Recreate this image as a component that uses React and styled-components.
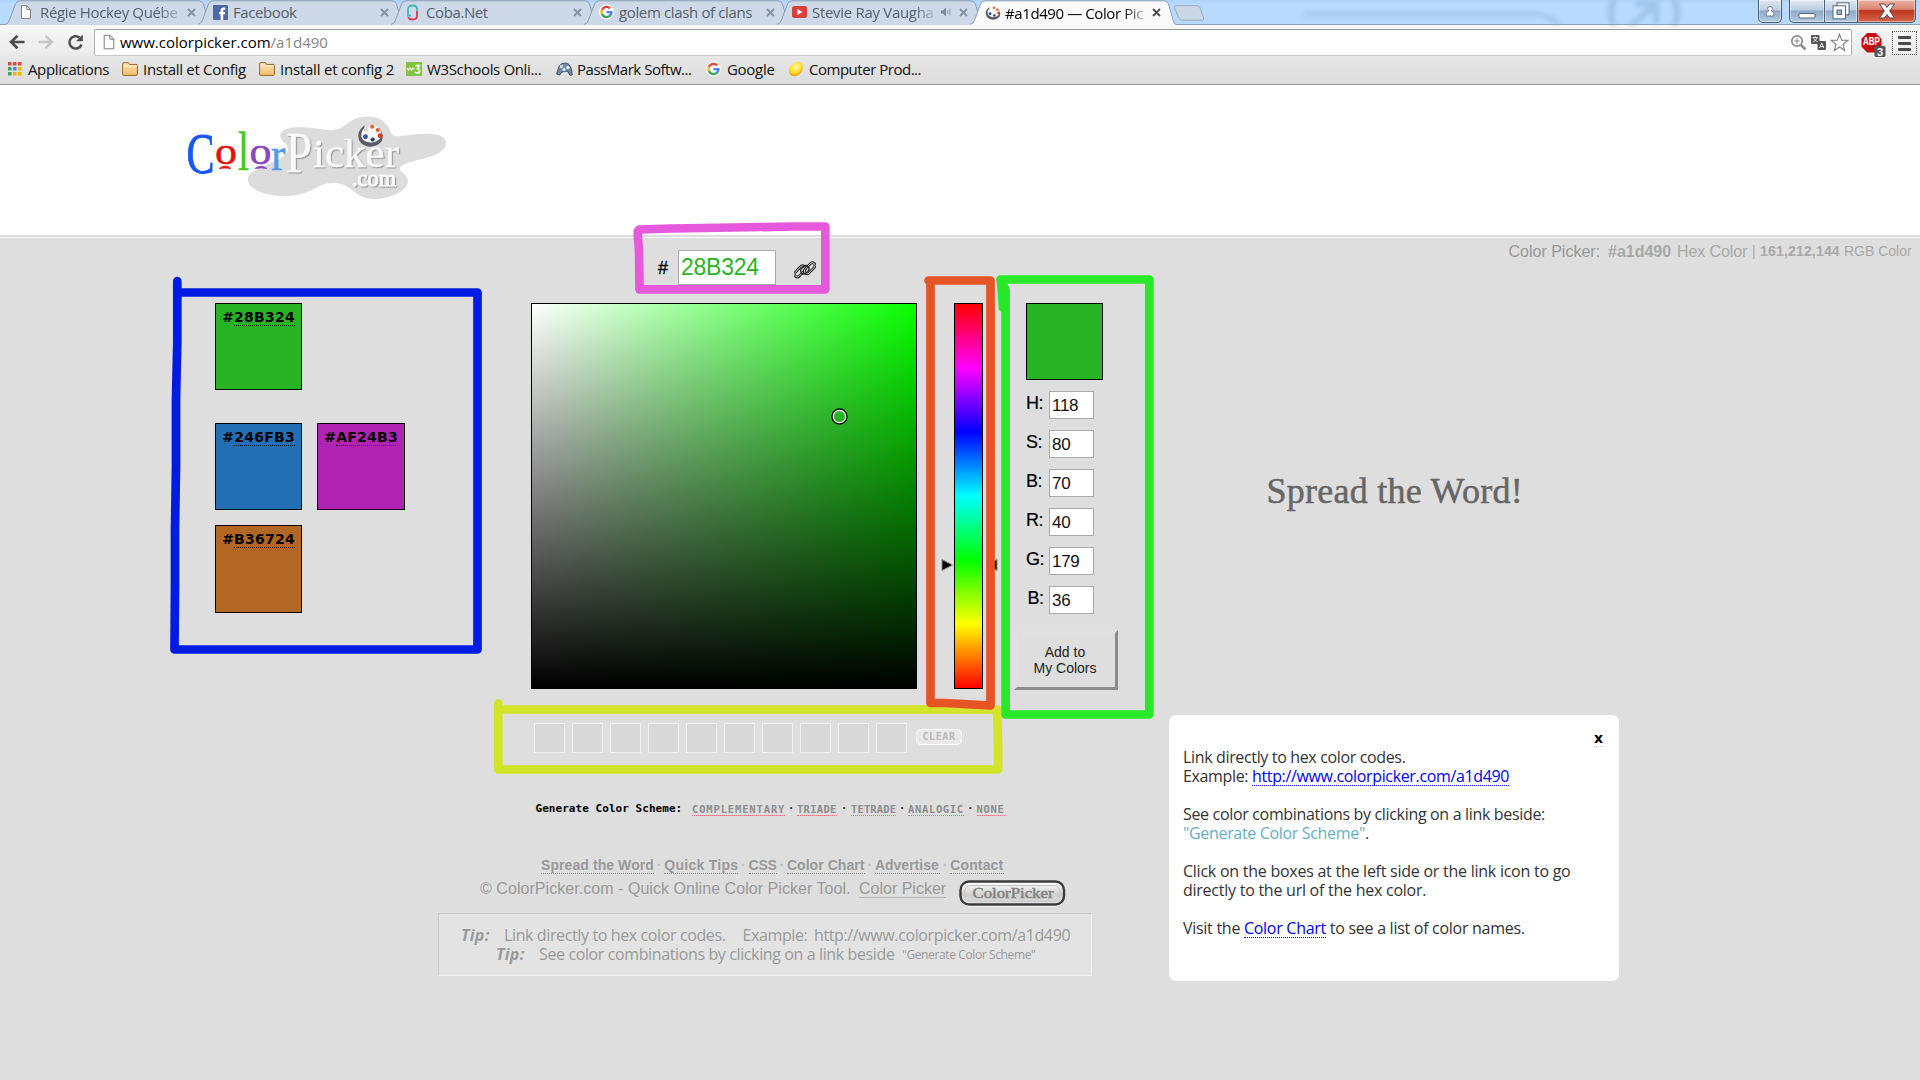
import React from "react";
import styled, { createGlobalStyle } from "styled-components";

const UI = '"Open Sans", "Noto Sans", sans-serif';
const ARIAL = '"Liberation Sans", Arial, sans-serif';
const VERDANA = '"DejaVu Sans", Verdana, sans-serif';
const PIXEL = '"DejaVu Sans Mono", monospace';

const GlobalStyle = createGlobalStyle`
  *, *::before, *::after { box-sizing: border-box; }
  body { margin: 0; background: #dedede; font-family: ${ARIAL}; overflow: hidden; }
`;

const Page = styled.div`
  position: relative;
  width: 1920px;
  height: 1080px;
  display: flex;
  flex-direction: column;
  overflow: hidden;
  background: #dedede;
`;

/* ---------- browser frame ---------- */

const TitleBar = styled.div`
  position: relative;
  display: flex;
  align-items: flex-start;
  height: 25px;
  padding-left: 5px;
  background: linear-gradient(#aed2f8, #b7dafe 4px, #b7dafe);
  border-bottom: 1px solid #8e9fb3;
`;

const GlassDrawing = styled.svg`
  position: absolute;
  left: 1290px;
  top: 0;
  filter: blur(2px);
`;

const TabItem = styled.div`
  position: relative;
  z-index: ${(p) => (p.$active ? 3 : 1)};
  flex: none;
  width: 206px;
  height: ${(p) => (p.$active ? 25 : 24)}px;
  margin-right: -13px;
  display: flex;
  align-items: center;
  padding: 0 15px 0 15px;
  color: ${(p) => (p.$active ? "#000" : "#56606b")};
`;

const TabShape = styled.svg`
  position: absolute;
  left: 0;
  top: 0;
`;

const TabIcon = styled.span`
  position: relative;
  width: 20px;
  display: flex;
  flex: none;
  svg { display: block; }
`;

const TabTitle = styled.span`
  position: relative;
  flex: 1;
  font: 15px/24px ${UI};
  letter-spacing: ${(p) => p.$ls ?? -0.4}px;
  white-space: nowrap;
  ${(p) => p.$fade && "mask-image: linear-gradient(to right, #000 84%, rgba(0, 0, 0, 0.25) 100%);"}
`;

const TabTail = styled.span`
  position: relative;
  display: flex;
  align-items: center;
  gap: 8px;
  margin-left: 7px;
`;

const NewTab = styled.svg`
  position: relative;
  margin: 5px 0 0 10px;
`;

const WindowControls = styled.div`
  position: absolute;
  right: 4px;
  top: 0;
  display: flex;
`;

const WinButton = styled.div`
  width: ${(p) => p.$w}px;
  height: 23px;
  margin-right: ${(p) => p.$mr || 0}px;
  display: flex;
  align-items: center;
  justify-content: center;
  border: 1px solid #4d5c70;
  border-top: 0;
  border-left-width: ${(p) => (p.$join ? 0 : 1)}px;
  border-radius: ${(p) => p.$radius};
  background: ${(p) => p.$bg};
  box-shadow: inset 0 0 0 1px rgba(255, 255, 255, 0.45);
`;

const Toolbar = styled.div`
  display: flex;
  align-items: flex-start;
  height: 33px;
  padding: 4px 0 0 9px;
  background: linear-gradient(#f8f8f8, #e9e9e9);
`;

const NavIcon = styled.svg`
  margin: 4px ${(p) => p.$mr}px 0 0;
`;

const Omnibox = styled.div`
  display: flex;
  align-items: center;
  width: 1758px;
  height: 27px;
  padding: 0 2px 1px 8px;
  background: #fff;
  border: 1px solid #b3b3b3;
  border-top-color: #9a9a9a;
  border-bottom-color: #c8c8c8;
  border-radius: 2px;
`;

const Url = styled.span`
  flex: 1;
  margin-left: 5px;
  font: 15px/24px ${UI};
  color: #000;
  em { font-style: normal; color: #858585; }
`;

const OmniActions = styled.span`
  display: flex;
  align-items: center;
  gap: 4px;
`;

const Extensions = styled.div`
  display: flex;
  align-items: flex-start;
  gap: 5px;
  margin-left: 9px;
`;

const MenuButton = styled.div`
  display: flex;
  flex-direction: column;
  justify-content: center;
  align-items: center;
  gap: 3px;
  width: 25px;
  height: 24px;
  margin-top: 2px;
  border: 1px dotted #555;
  i { width: 13px; height: 3px; background: #4a4a4a; border-radius: 1px; }
`;

const Bookmarks = styled.div`
  display: flex;
  align-items: center;
  height: 27px;
  padding: 0 0 4px 8px;
  background: linear-gradient(#e6e6e6, #dcdcdc);
  border-bottom: 1px solid #999;
`;

const Bookmark = styled.span`
  display: flex;
  align-items: center;
  width: ${(p) => p.$w}px;
  font: 15px/20px ${UI};
  letter-spacing: ${(p) => p.$ls}px;
  color: #111;
  white-space: nowrap;
  svg { flex: none; margin-right: ${(p) => p.$gap || 5}px; }
`;

/* ---------- page header ---------- */

const SiteHeader = styled.header`
  height: 153px;
  padding: 25px 0 0 180px;
  background: linear-gradient(#fff 150px, #dcdcdc 150px, #dcdcdc 152px, #fff 152px);
`;

const HexRow = styled.div`
  display: flex;
  align-items: flex-start;
  height: 65px;
  padding: 0 8px 0 658px;
`;

const Hash = styled.span`
  width: 20px;
  margin-top: 19px;
  font: 18px/22px ${ARIAL};
  -webkit-text-stroke: 0.3px #000;
`;

const HexInput = styled.div`
  width: 98px;
  height: 35px;
  margin-top: 12px;
  padding-left: 2px;
  border: 1px solid #a9a9a9;
  background: #fff;
  color: #28b324;
  font: 23px/33px ${ARIAL};
  letter-spacing: -0.25px;
`;

const LinkIcon = styled.svg`
  margin: 21px 0 0 18px;
`;

const ColorMeta = styled.div`
  display: flex;
  margin-left: auto;
  color: #a8a8a8;
  font: 16px/27px ${ARIAL};
  white-space: nowrap;
`;

const MetaPart = styled.span`
  width: ${(p) => p.$w}px;
  font-size: ${(p) => p.$size || 16}px;
  font-weight: ${(p) => (p.$bold ? 700 : 400)};
  letter-spacing: ${(p) => p.$ls || 0}px;
  color: ${(p) => p.$color || "#a8a8a8"};
`;

/* ---------- picker ---------- */

const PickerRow = styled.div`
  display: flex;
  align-items: flex-start;
  height: 387px;
  padding-left: 215px;
`;

const Scheme = styled.div`
  display: flex;
  flex-direction: column;
  gap: 15px;
  width: 316px;
`;

const SchemeLine = styled.div`
  display: flex;
  gap: 15px;
  margin-bottom: ${(p) => (p.$main ? 18 : 0)}px;
`;

const SchemeSwatch = styled.div`
  width: ${(p) => p.$w || 87}px;
  height: ${(p) => p.$h || 87}px;
  padding: 6px 6px 0 0;
  border: 1px solid #000;
  background: ${(p) => p.$color};
  text-align: right;
  font: bold 14px/14px ${VERDANA};
  letter-spacing: 0.25px;
  color: #000;
  a { display: inline-block; padding-bottom: 1px; border-bottom: 1px dotted #000; }
`;

const Field = styled.div`
  position: relative;
  width: 386px;
  height: 386px;
  border: 1px solid #000;
  background: linear-gradient(to top, #000, rgba(0, 0, 0, 0)), linear-gradient(to right, #fff, #08ff00);
`;

const Cursor = styled.svg`
  position: absolute;
  left: 299px;
  top: 104px;
`;

const HueStrip = styled.div`
  position: relative;
  width: 29px;
  height: 386px;
  margin-left: 37px;
  border: 1px solid #000;
  background: linear-gradient(#f00, #f0f 16.67%, #00f 33.33%, #0ff 50%, #0f0 66.67%, #ff0 83.33%, #f00);
`;

const HueArrow = styled.svg`
  position: absolute;
  top: 254px;
  left: ${(p) => p.$x}px;
`;

const Controls = styled.div`
  display: flex;
  flex-direction: column;
  align-items: flex-start;
  width: 104px;
  margin-left: 31px;
`;

const Current = styled.div`
  width: 77px;
  height: 77px;
  margin: 0 0 11px 12px;
  border: 1px solid #000;
  background: #28b324;
`;

const Channel = styled.div`
  display: flex;
  align-items: flex-start;
  height: 28px;
  margin: 0 0 11px 12px;
`;

const ChannelLabel = styled.span`
  width: 23px;
  padding-left: ${(p) => p.$indent || 0}px;
  font: 18px/25px ${ARIAL};
  letter-spacing: -0.5px;
  -webkit-text-stroke: 0.2px #000;
`;

const ChannelInput = styled.div`
  width: 45px;
  height: 28px;
  padding-left: 2px;
  border: 1px solid #a9a9a9;
  background: #fff;
  font: 17px/28px ${ARIAL};
  letter-spacing: -0.3px;
  color: #111;
`;

const AddButton = styled.div`
  width: 104px;
  height: 60px;
  margin-top: 5px;
  padding: 11px 2px 0 0;
  border: 3px solid;
  border-color: #e0e0e0 #8c8c8c #8c8c8c #e0e0e0;
  background: #dedede;
  text-align: center;
  font: 14px/16px ${ARIAL};
  color: #222;
`;

const SpreadTitle = styled.div`
  margin: 168px 0 0 148.5px;
  font: 36px/40px "Liberation Serif", "Times New Roman", serif;
  letter-spacing: 0.25px;
  color: #666;
  -webkit-text-stroke: 0.5px #666;
  white-space: nowrap;
`;

/* ---------- lower area ---------- */

const LowerRow = styled.div`
  display: flex;
  align-items: flex-start;
`;

const LowerLeft = styled.div`
  width: 1169px;
`;

const SavedRow = styled.div`
  display: flex;
  align-items: flex-start;
  gap: 7px;
  padding: 33px 0 0 534px;
`;

const SavedBox = styled.i`
  width: 31px;
  height: 30px;
  border: 1px solid #efefef;
  background: #d8d8d8;
`;

const ClearButton = styled.span`
  width: 46px;
  height: 16px;
  margin: 6px 0 0 2px;
  border: 1.5px solid #fff;
  border-radius: 5px;
  background: #e8e8e8;
  text-align: center;
  font: bold 10px/14px ${PIXEL};
  letter-spacing: 0.6px;
  color: #b8b8b8;
`;

const SchemeLinks = styled.div`
  display: flex;
  height: 16px;
  margin-top: 48px;
  padding-left: 535.5px;
  font: bold 11px/16px ${PIXEL};
  letter-spacing: 0.05px;
  white-space: nowrap;
`;

const SchemeLabel = styled.span`
  width: 156.5px;
`;

const SchemeLink = styled.a`
  width: ${(p) => p.$w}px;
  height: 15px;
  font-size: 10.5px;
  letter-spacing: ${(p) => p.$ls}px;
  color: #8c8c8c;
  border-bottom: 1px dotted #e07070;
`;

const Dot = styled.span`
  width: ${(p) => p.$w}px;
  text-align: center;
  letter-spacing: 0;
  color: ${(p) => p.$color || "#333"};
`;

const FooterLinks = styled.div`
  display: flex;
  margin-top: 40px;
  padding-left: 541px;
  font: bold 14px/16px ${ARIAL};
  color: #999;
  white-space: nowrap;
`;

const FooterLink = styled.a`
  width: ${(p) => p.$w}px;
  letter-spacing: ${(p) => p.$ls || 0}px;
  border-bottom: 1px dotted #888;
`;

const Copyright = styled.div`
  display: flex;
  align-items: flex-start;
  height: 27px;
  margin-top: 6px;
  padding-left: 480px;
  font: 16px/17px ${ARIAL};
  color: #999;
  white-space: nowrap;
  span { width: 379px; letter-spacing: 0.05px; }
  a { border-bottom: 1px solid #b8b8b8; }
`;

const BadgeDrawing = styled.svg`
  margin-left: 13px;
`;

const TipBox = styled.div`
  width: 654px;
  height: 63px;
  margin: 6px 0 0 438px;
  padding-top: 12px;
  border: 1px solid #f2f2f2;
  border-top-color: #cacaca;
  border-left-color: #cacaca;
  background: #e3e3e3;
  font: 16px/19px ${UI};
  letter-spacing: -0.38px;
  color: #999;
`;

const TipLine = styled.div`
  display: flex;
  padding-left: ${(p) => p.$indent}px;
  white-space: nowrap;
`;

const TipPart = styled.span`
  flex: none;
  width: ${(p) => p.$w}px;
  font-size: ${(p) => p.$size || 16}px;
`;

const TipLead = styled(TipPart)`
  font-weight: 700;
  font-style: italic;
  letter-spacing: 0.3px;
`;

const HelpCard = styled.section`
  display: flex;
  flex-direction: column;
  width: 450px;
  height: 266px;
  margin-top: 25px;
  padding: 17px 16px 0 14px;
  border-radius: 7px;
  background: #fff;
  font: 16px/19px ${UI};
  color: #333;
  white-space: nowrap;
`;

const Close = styled.b`
  align-self: flex-end;
  height: 15px;
  margin-bottom: 1px;
  font: bold 14px/13px ${VERDANA};
  color: #000;
  border-bottom: 1px dotted #ccc;
`;

const HelpText = styled.p`
  margin: 0 0 19px;
  letter-spacing: ${(p) => p.$ls ?? -0.35}px;
`;

const HelpLink = styled.a`
  display: inline-block;
  height: 19px;
  color: #0000ee;
  border-bottom: 1px dotted #0000ee;
  vertical-align: top;
`;

const Accent = styled.span`
  color: #65b0bf;
`;

const Markup = styled.svg`
  position: absolute;
  left: 0;
  top: 0;
  pointer-events: none;
`;

/* ---------- icons ---------- */

const PageIcon = ({ h = 15 }) => (
  <svg width="12" height={h} viewBox="0 0 12 15">
    <path d="M1.2 .7h5.6l4 4v9.6H1.2z" fill="#fdfdfd" stroke="#7a7a7a" />
    <path d="M6.8 .7v4h4" fill="none" stroke="#7a7a7a" />
  </svg>
);

const FacebookIcon = () => (
  <svg width="15" height="15" viewBox="0 0 15 15">
    <rect width="15" height="15" rx="1" fill="#4e69a2" />
    <path d="M7.6 15V9.3H6V7h1.600V5.400C7.600 3.500 8.700 2.500 10.400 2.500h1.900v2.300h-1.200c-.7 0-.9.4-.9 1V7h2.100l-.3 2.300h-1.800V15z" fill="#fff" />
  </svg>
);

const CobaIcon = () => (
  <svg width="13" height="17" viewBox="0 0 13 17" fill="none" strokeWidth="1.800">
    <path d="M5 11.500H2V5C2 3 3.500 1.500 6.500 1.500S11 3 11 5v2" stroke="#45b5bd" />
    <path d="M11 7v5c0 2.200-1.500 3.500-4.500 3.500-2.500 0-3.800-.8-4.300-2.300" stroke="#cf3a57" />
  </svg>
);

const GoogleIcon = () => (
  <svg width="15" height="16" viewBox="0 0 48 48">
    <circle cx="24" cy="24" r="24" fill="#fff" />
    <path fill="#ea4335" d="M24 11.500c3.300 0 6.200 1.200 8.500 3.300l5.500-5.500C34.500 6 29.700 4 24 4 16.200 4 9.500 8.500 6.200 15l6.400 5c1.600-4.900 6.100-8.500 11.400-8.500z" />
    <path fill="#4285f4" d="M43.500 24.500c0-1.500-.1-2.600-.4-4H24v7.700h11c-.6 3-2.300 5-4.700 6.500l6.200 4.900c4.300-4 7-9.200 7-15.100z" />
    <path fill="#fbbc05" d="M12.600 28c-.5-1.300-.7-2.600-.7-4s.3-2.700.7-4l-6.400-5C4.800 17.700 4 20.700 4 24s.8 6.300 2.200 9z" />
    <path fill="#34a853" d="M24 44c5.400 0 9.900-1.800 12.900-4.700l-6.200-4.900c-1.700 1.200-3.900 1.900-6.700 1.900-5.300 0-9.800-3.500-11.400-8.300l-6.400 5C9.500 39.500 16.200 44 24 44z" />
  </svg>
);

const YoutubeIcon = () => (
  <svg width="15" height="12" viewBox="0 0 15 12">
    <rect width="15" height="12" rx="2.500" fill="#db3f3c" />
    <path d="M5.500 3v6l5-3z" fill="#fff" />
  </svg>
);

const PaletteIcon = ({ w = 16 }) => (
  <svg width={w} height={w * 0.93} viewBox="0 0 24 22">
    <path d="M7 3C1 6-1 14 4 19c5 4 13 4 18-2 2-5 0-10-3-12-4-3-8-1-8 3 0 4-6 3-4-6z" fill="#5c5c68" />
    <path d="M8 4C4 6 2 13 6 16c5 3.500 12 2 15-2 2-4 0-8-3-10-4-3-8-2-8 2 0 5-6 3-2-3z" fill="#f8f8f8" />
    <circle cx="13.500" cy="4" r="1.900" fill="#df6a35" />
    <circle cx="18.500" cy="7" r="1.900" fill="#d9623b" />
    <circle cx="20.500" cy="12" r="2.100" fill="#dd3820" />
    <circle cx="14" cy="15.500" r="1.900" fill="#39415e" />
    <circle cx="7.500" cy="13" r="2.200" fill="#3656ac" />
  </svg>
);

const CloseIcon = ({ dark }) => (
  <svg width="9" height="9" viewBox="0 0 9 9">
    <path d="M1 1l7 7M8 1L1 8" stroke={dark ? "#4c4c4c" : "#8792a0"} strokeWidth="1.900" />
  </svg>
);

const SpeakerIcon = () => (
  <svg width="10" height="10" viewBox="0 0 10 10">
    <path d="M0 3.500h2L5 .5v9L2 6.500H0z" fill="#7d8794" />
    <path d="M6.800 3v4M9 1.500v7" stroke="#8d97a3" />
  </svg>
);

const FolderIcon = () => (
  <svg width="16" height="14" viewBox="0 0 16 14">
    <defs>
      <linearGradient id="folder" x2="0" y2="1">
        <stop offset="0" stopColor="#fde3ad" />
        <stop offset="1" stopColor="#f3bd6e" />
      </linearGradient>
    </defs>
    <path d="M.6 3V12.200q0 1.200 1.200 1.200h12.400q1.200 0 1.200-1.200V3.500q0-1.100-1.200-1.100H7.500L6.500.6H2Q.6.6.6 2z" fill="url(#folder)" stroke="#96692c" />
    <path d="M1.500 4h13" stroke="#fff1cf" />
  </svg>
);

const AppsIcon = () => (
  <svg width="14" height="14" viewBox="0 0 14 14">
    {["#e8453c", "#e8453c", "#e8453c", "#3aa757", "#4688f1", "#f5b400", "#3aa757", "#f5b400", "#f5b400"].map((c, i) => (
      <rect key={i} x={(i % 3) * 5} y={Math.floor(i / 3) * 5} width="3.500" height="3.500" fill={c} />
    ))}
  </svg>
);

const W3Icon = () => (
  <svg width="16" height="14" viewBox="0 0 16 14">
    <rect width="16" height="14" fill="#84c341" />
    <path d="M1 6l1.500 2L4 6l1.500 2L7 6l1.500 1" fill="none" stroke="#fff" strokeWidth="1.200" />
    <path d="M9.500 3.500h4l-2.200 3c3.300.3 2.700 4.500 0 4.500-1 0-1.800-.4-2.300-1" fill="none" stroke="#fff" strokeWidth="1.500" />
  </svg>
);

const GamepadIcon = () => (
  <svg width="17" height="14" viewBox="0 0 17 14">
    <path d="M.6 12L3 4.500Q4 2 7 1.300q4-.8 6 1.200 2 2 2.800 6.500l.4 4-2.200.5-2.500-4.500-3 .5L6 10l-2.500 3z" fill="#7089a6" stroke="#35485f" strokeWidth=".9" />
    <path d="M4 5.500l3-2.500M4 3.500l2.500 2" stroke="#dfe8f1" strokeWidth="1.100" />
    <circle cx="8" cy="7.500" r="1.500" fill="#e9eff6" />
    <circle cx="12" cy="5.500" r="1.700" fill="#e9eff6" />
  </svg>
);

const EggIcon = () => (
  <svg width="16" height="16" viewBox="0 0 16 16">
    <defs>
      <radialGradient id="egg" cx=".6" cy=".4" r=".6">
        <stop offset="0" stopColor="#fffbb0" />
        <stop offset=".7" stopColor="#ffdc20" />
        <stop offset="1" stopColor="#f59a0c" />
      </radialGradient>
    </defs>
    <ellipse cx="8" cy="8" rx="8" ry="6" transform="rotate(-48 8 8)" fill="url(#egg)" />
  </svg>
);

const Logo = () => (
  <svg width="270" height="90" viewBox="180 110 270 90">
    <defs>
      <filter id="lift" x="-10%" y="-10%" width="125%" height="130%">
        <feDropShadow dx="1.200" dy="1.200" stdDeviation=".5" floodColor="#9a9a9a" />
      </filter>
    </defs>
    <path
      d="M281 133c-4 7 8 11 7 17-2 13-43 17-40 31 2 11 23 16 42 15 24-2 26-13 44-13 18 0 20 16 40 16 16 0 34-8 34-18 0-7-9-8-8-13 3-9 46-8 46-25 0-7-10-10-23-9-11 0-23 3-28 2-6-2-3-7-11-14-8-7-24-7-33-1-9 6-11 10-24 9-14-2-41-6-46 3z"
      fill="#dcdcdc"
    />
    <g fontFamily='"Liberation Serif", serif'>
      <text x="186.500" y="173" fontSize="58" textLength="28" lengthAdjust="spacingAndGlyphs" fill="#1957f5" stroke="#1957f5" strokeWidth=".9">C</text>
      <g fontSize="38" strokeWidth=".5">
        <text x="215" y="164" textLength="22" lengthAdjust="spacingAndGlyphs" fill="#e3120f" stroke="#e3120f">o</text>
        <text x="238" y="170" fontSize="54" textLength="11" lengthAdjust="spacingAndGlyphs" fill="#4bc81c" stroke="#4bc81c">l</text>
        <text x="249.500" y="164" textLength="22" lengthAdjust="spacingAndGlyphs" fill="#8c45bd" stroke="#8c45bd">o</text>
        <text x="271" y="170" fontSize="46" textLength="14.500" lengthAdjust="spacingAndGlyphs" fill="#5499e8" stroke="#5499e8">r</text>
      </g>
      <path d="M219 168.500q7-5 12 0q-6-1-12 0z" fill="#e3120f" stroke="#e3120f" strokeWidth=".7" />
      <path d="M255 168.500q6-5 12 0q-6-1-12 0z" fill="#8c45bd" stroke="#8c45bd" strokeWidth=".7" />
      <g fill="#fafafa" filter="url(#lift)" stroke="#fafafa" strokeWidth=".3">
        <text x="286" y="172" fontSize="57" textLength="26" lengthAdjust="spacingAndGlyphs">P</text>
        <text x="313" y="167" fontSize="40" textLength="86" lengthAdjust="spacingAndGlyphs">icker</text>
        <text x="352" y="186" fontSize="23" strokeWidth=".9" textLength="44" lengthAdjust="spacingAndGlyphs">.com</text>
      </g>
    </g>
    <g transform="translate(357 122)">
      <PaletteIcon w={27} />
    </g>
  </svg>
);

const TABS = [
  { icon: <PageIcon h={14} />, title: "Régie Hockey Québe", fade: true, ls: -0.35 },
  { icon: <FacebookIcon />, title: "Facebook" },
  { icon: <CobaIcon />, title: "Coba.Net" },
  { icon: <GoogleIcon />, title: "golem clash of clans", ls: -0.36 },
  { icon: <YoutubeIcon />, title: "Stevie Ray Vaugha", fade: true, sound: true, ls: -0.3 },
  { icon: <PaletteIcon />, title: "#a1d490 — Color Pic", fade: true, active: true },
];

const CHANNELS = [["H:", "118"], ["S:", "80"], ["B:", "70"], ["R:", "40"], ["G:", "179"], ["B:", "36"]];

const BLUE_BTN = "linear-gradient(#dfe8f2, #bccddf 45%, #8fa9c6 50%, #b4cbe2)";

export default function App() {
  return (
    <Page>
      <GlobalStyle />
      <TitleBar>
        <GlassDrawing width="420" height="25" viewBox="0 0 420 25">
          <path d="M14 14h230q14 0 24 10" fill="none" stroke="#94b8db" strokeOpacity=".5" strokeWidth="5" />
          <circle cx="354" cy="13" r="33" fill="none" stroke="#88adcf" strokeOpacity=".5" strokeWidth="6" />
          <path d="M340 26l24-20M346 4h20v20" fill="none" stroke="#88adcf" strokeOpacity=".45" strokeWidth="6" />
        </GlassDrawing>
        {TABS.map((t) => (
          <TabItem key={t.title} $active={t.active}>
            <TabShape width="206" height="25" viewBox="0 0 206 25">
              <path
                d="M0 24.500Q3 24 4.500 20L10.500 4Q12 .8 15 .8H194Q197 .8 198.500 4L203 20Q204 24 206 24.500V25H0z"
                fill={t.active ? "#fafafa" : "#cdd9e8"}
              />
              <path
                d="M0 24.500Q3 24 4.500 20L10.500 4Q12 .8 15 .8H194Q197 .8 198.500 4L203 20Q204 24 206 24.500"
                fill="none"
                stroke="#8c9db1"
              />
            </TabShape>
            <TabIcon>{t.icon}</TabIcon>
            <TabTitle $fade={t.fade} $ls={t.ls}>{t.title}</TabTitle>
            <TabTail>
              {t.sound && <SpeakerIcon />}
              <CloseIcon dark={t.active} />
            </TabTail>
          </TabItem>
        ))}
        <NewTab width="32" height="16" viewBox="0 0 32 16">
          <path d="M3 .7h21q2 0 3 2l3.500 10q.8 2.500-1.500 2.500H9q-2 0-3-2L1.500 3Q1 .7 3 .7z" fill="#c9d7e7" stroke="#98abc0" />
        </NewTab>
        <WindowControls>
          <WinButton $w={24} $mr={7} $radius="0 0 5px 5px" $bg={BLUE_BTN}>
            <svg width="10" height="12" viewBox="0 0 12 14">
              <path d="M1.500 13V10q0-2.500 3-3-1.200-1.200-1.200-3a2.700 2.700 0 015.400 0q0 1.800-1.200 3 3 .5 3 3v3z" fill="#fff" stroke="#5a6b82" />
            </svg>
          </WinButton>
          <WinButton $w={36} $radius="0 0 0 5px" $bg={BLUE_BTN}>
            <svg width="18" height="16" viewBox="0 0 18 16">
              <rect x="1" y="10.500" width="16" height="4.500" rx="1" fill="#fff" stroke="#56657a" />
            </svg>
          </WinButton>
          <WinButton $w={33} $join $radius="0" $bg={BLUE_BTN}>
            <svg width="18" height="18" viewBox="0 0 18 18">
              <rect x="5" y=".8" width="12" height="12" fill="#fff" stroke="#56657a" />
              <rect x="1" y="3.800" width="12.500" height="13" fill="#fff" stroke="#56657a" />
              <rect x="5" y="8" width="4.500" height="4.500" fill="#9db5d0" stroke="#56657a" />
            </svg>
          </WinButton>
          <WinButton $w={58} $join $radius="0 0 5px 0" $bg="linear-gradient(#eeb2a6, #d98474 42%, #c0351f 48%, #d4664a)">
            <svg width="18" height="16" viewBox="0 0 18 16">
              <path d="M1.500 1h5L9 4.500 11.500 1h5L11.700 8l4.800 7h-5L9 11.500 6.500 15h-5L6.300 8z" fill="#fff" stroke="#56454d" />
            </svg>
          </WinButton>
        </WindowControls>
      </TitleBar>

      <Toolbar>
        <NavIcon width="16" height="18" viewBox="0 0 16 18" $mr={13}>
          <path d="M15.500 9H2.500M8.500 2.800L2 9l6.500 6.200" fill="none" stroke="#4d4d4d" strokeWidth="2.600" />
        </NavIcon>
        <NavIcon width="16" height="18" viewBox="0 0 16 18" $mr={13}>
          <path d="M.5 9h13M7.500 2.800L14 9l-6.500 6.200" fill="none" stroke="#c4c4c4" strokeWidth="2.400" />
        </NavIcon>
        <NavIcon width="17" height="18" viewBox="0 0 17 18" $mr={10}>
          <path d="M14.500 11.500A6.200 6.200 0 1112.500 4.500" fill="none" stroke="#4d4d4d" strokeWidth="2.500" />
          <path d="M15.800 1.500v6.800H9z" fill="#4d4d4d" />
        </NavIcon>
        <Omnibox>
          <PageIcon h={16} />
          <Url>www.colorpicker.com<em>/a1d490</em></Url>
          <OmniActions>
            <svg width="17" height="17" viewBox="0 0 17 17" fill="none" stroke="#8e8e8e">
              <circle cx="7" cy="7" r="5.200" strokeWidth="1.700" />
              <path d="M4.300 7h5.400M7 4.300v5.400" strokeWidth="1.200" />
              <path d="M11 11l4.500 4.500" strokeWidth="2.600" />
            </svg>
            <svg width="15" height="15" viewBox="0 0 15 15">
              <rect width="8.500" height="9" rx="1" fill="#555" />
              <path d="M1.500 2.500h5.500M4.200 1v1.500M6 3Q5 6 1.700 7M2.500 3Q4 6 7 7" fill="none" stroke="#fff" strokeWidth=".8" />
              <rect x="6.500" y="6" width="8.500" height="9" rx="1" fill="#555" />
              <path d="M8.500 13l2.200-5 2.200 5M9.500 11.500h2.500" fill="none" stroke="#fff" strokeWidth=".9" />
            </svg>
            <svg width="19" height="19" viewBox="0 0 19 19">
              <path d="M9.500 1.200l2.200 5.900 6.200.3-4.900 3.900 1.700 6.200-5.200-3.500-5.200 3.500L6 11.300 1.100 7.400l6.200-.3z" fill="#fff" stroke="#858585" strokeWidth="1.200" />
            </svg>
          </OmniActions>
        </Omnibox>
        <Extensions>
          <svg width="26" height="28" viewBox="0 0 26 28">
            <path d="M6.200 4h8.600l5.700 5.700v8.100l-5.700 5.700H6.200L.5 17.800V9.700z" fill="#c70d12" />
            <text x="10.500" y="16" textAnchor="middle" fontFamily='"Liberation Sans", sans-serif' fontWeight="700" fontSize="10" textLength="17" lengthAdjust="spacingAndGlyphs" fill="#fff">ABP</text>
            <rect x="13.500" y="17" width="11" height="11" rx="1.500" fill="#555" />
            <text x="19" y="26.500" textAnchor="middle" fontFamily='"Liberation Sans", sans-serif' fontWeight="700" fontSize="11" fill="#fff">3</text>
          </svg>
          <MenuButton><i /><i /><i /></MenuButton>
        </Extensions>
      </Toolbar>

      <Bookmarks>
        <Bookmark $w={114} $ls={-0.37} $gap={6}><AppsIcon />Applications</Bookmark>
        <Bookmark $w={137} $ls={-0.3}><FolderIcon />Install et Config</Bookmark>
        <Bookmark $w={147} $ls={-0.22}><FolderIcon />Install et config 2</Bookmark>
        <Bookmark $w={150} $ls={-0.35}><W3Icon />W3Schools Onli...</Bookmark>
        <Bookmark $w={150} $ls={-0.47} $gap={4}><GamepadIcon />PassMark Softw...</Bookmark>
        <Bookmark $w={82} $ls={-0.3} $gap={6}><GoogleIcon />Google</Bookmark>
        <Bookmark $w={140} $ls={-0.48}><EggIcon />Computer Prod...</Bookmark>
      </Bookmarks>

      <SiteHeader><Logo /></SiteHeader>

      <HexRow>
        <Hash>#</Hash>
        <HexInput>28B324</HexInput>
        <LinkIcon width="22" height="22" viewBox="0 0 22 22">
          <g transform="rotate(-47 11 11)" fill="none">
            <rect x="0" y="5.500" width="13" height="5.500" rx="2.700" stroke="#1b1b1b" strokeWidth="2.600" />
            <rect x="0" y="5.500" width="13" height="5.500" rx="2.700" stroke="#dedede" strokeWidth=".9" />
            <rect x="9" y="10.500" width="13" height="5.500" rx="2.700" stroke="#1b1b1b" strokeWidth="2.600" />
            <rect x="9" y="10.500" width="13" height="5.500" rx="2.700" stroke="#dedede" strokeWidth=".9" />
            <rect x="6.500" y="7.500" width="9" height="6.500" rx="3" stroke="#1b1b1b" strokeWidth="1.200" />
          </g>
        </LinkIcon>
        <ColorMeta>
          <MetaPart $w={99.500} $color="#979797">Color Picker:</MetaPart>
          <MetaPart $w={69} $bold>#a1d490</MetaPart>
          <MetaPart $w={75} $ls={-0.1}>Hex Color</MetaPart>
          <MetaPart $w={8} $size={14}>|</MetaPart>
          <MetaPart $w={84} $size={14} $bold $ls={0.18}>161,212,144</MetaPart>
          <MetaPart $w={68} $size={14}>RGB Color</MetaPart>
        </ColorMeta>
      </HexRow>

      <PickerRow>
        <Scheme>
          <SchemeLine $main>
            <SchemeSwatch $color="#28b324">#<a>28B324</a></SchemeSwatch>
          </SchemeLine>
          <SchemeLine>
            <SchemeSwatch $color="#246fb3">#<a>246FB3</a></SchemeSwatch>
            <SchemeSwatch $w={88} $color="#af24b3">#<a>AF24B3</a></SchemeSwatch>
          </SchemeLine>
          <SchemeLine>
            <SchemeSwatch $h={88} $color="#b36724">#<a>B36724</a></SchemeSwatch>
          </SchemeLine>
        </Scheme>
        <Field>
          <Cursor width="17" height="17" viewBox="0 0 17 17" fill="none">
            <circle cx="8.500" cy="8.500" r="7.500" stroke="#000" strokeWidth="1.300" />
            <circle cx="8.500" cy="8.500" r="6.200" stroke="#fff" strokeWidth="1.200" />
          </Cursor>
        </Field>
        <HueStrip>
          <HueArrow $x={-14} width="13" height="14" viewBox="0 0 13 14">
            <path d="M1 1.500v11L11.500 7z" fill="#000" stroke="#888" strokeWidth="1" />
          </HueArrow>
          <HueArrow $x={30} width="13" height="14" viewBox="0 0 13 14">
            <path d="M12 1.500v11L1.500 7z" fill="#000" stroke="#888" strokeWidth="1" />
          </HueArrow>
        </HueStrip>
        <Controls>
          <Current />
          {CHANNELS.map(([label, value], i) => (
            <Channel key={i}>
              <ChannelLabel $indent={i === 5 ? 1.5 : 0}>{label}</ChannelLabel>
              <ChannelInput>{value}</ChannelInput>
            </Channel>
          ))}
          <AddButton>Add to<br />My Colors</AddButton>
        </Controls>
        <SpreadTitle>Spread the Word!</SpreadTitle>
      </PickerRow>

      <LowerRow>
        <LowerLeft>
          <SavedRow>
            {Array.from({ length: 10 }, (_, i) => <SavedBox key={i} />)}
            <ClearButton>CLEAR</ClearButton>
          </SavedRow>
          <SchemeLinks>
            <SchemeLabel>Generate Color Scheme:</SchemeLabel>
            <SchemeLink $w={93} $ls={0.85}>COMPLEMENTARY</SchemeLink><Dot $w={12}>·</Dot>
            <SchemeLink $w={40} $ls={0.3}>TRIADE</SchemeLink><Dot $w={14}>·</Dot>
            <SchemeLink $w={45} $ls={0.12}>TETRADE</SchemeLink><Dot $w={12}>·</Dot>
            <SchemeLink $w={56} $ls={0.65}>ANALOGIC</SchemeLink><Dot $w={12.500}>·</Dot>
            <SchemeLink $w={28} $ls={0.7}>NONE</SchemeLink>
          </SchemeLinks>
          <FooterLinks>
            <FooterLink $w={113} $ls={0.08}>Spread the Word</FooterLink><Dot $w={10.300} $color="#bbb">·</Dot>
            <FooterLink $w={74} $ls={0.27}>Quick Tips</FooterLink><Dot $w={10.300} $color="#bbb">·</Dot>
            <FooterLink $w={28} $ls={-0.3}>CSS</FooterLink><Dot $w={10.300} $color="#bbb">·</Dot>
            <FooterLink $w={78} $ls={0.05}>Color Chart</FooterLink><Dot $w={10} $color="#bbb">·</Dot>
            <FooterLink $w={65}>Advertise</FooterLink><Dot $w={10.300} $color="#bbb">·</Dot>
            <FooterLink $w={54} $ls={0.15}>Contact</FooterLink>
          </FooterLinks>
          <Copyright>
            <span>© ColorPicker.com - Quick Online Color Picker Tool.</span>
            <a>Color Picker</a>
            <BadgeDrawing width="107" height="27" viewBox="0 0 107 27">
              <defs>
                <linearGradient id="badge" x2="0" y2="1">
                  <stop offset="0" stopColor="#fff" />
                  <stop offset=".6" stopColor="#cfcfcf" />
                  <stop offset="1" stopColor="#e4e4e4" />
                </linearGradient>
              </defs>
              <rect x="1" y="2" width="104" height="24.500" rx="9" fill="#fff" />
              <rect x="1.500" y="1.500" width="103.500" height="23" rx="8.500" fill="url(#badge)" stroke="#3b3b3b" strokeWidth="2.400" />
              <rect x="5.500" y="5.500" width="95.500" height="15.500" rx="6" fill="none" stroke="#c2c2c2" />
              <text x="54" y="18" textAnchor="middle" textLength="81" lengthAdjust="spacingAndGlyphs" fontFamily='"Liberation Serif", serif' fontSize="14" fill="#808080" stroke="#808080" strokeWidth=".4">ColorPicker</text>
            </BadgeDrawing>
          </Copyright>
          <TipBox>
            <TipLine $indent={22}>
              <TipLead $w={43}>Tip:</TipLead>
              <TipPart $w={238.500}>Link directly to hex color codes.</TipPart>
              <TipPart $w={71.500}>Example:</TipPart>
              <TipPart>http://www.colorpicker.com/a1d490</TipPart>
            </TipLine>
            <TipLine $indent={57}>
              <TipLead $w={43}>Tip:</TipLead>
              <TipPart $w={363}>See color combinations by clicking on a link beside</TipPart>
              <TipPart $size={12}>"Generate Color Scheme"</TipPart>
            </TipLine>
          </TipBox>
        </LowerLeft>
        <HelpCard>
          <Close>x</Close>
          <HelpText>
            Link directly to hex color codes.<br />
            Example: <HelpLink>http://www.colorpicker.com/a1d490</HelpLink>
          </HelpText>
          <HelpText $ls={-0.33}>
            See color combinations by clicking on a link beside:<br />
            <Accent>"Generate Color Scheme"</Accent>.
          </HelpText>
          <HelpText $ls={-0.25}>
            Click on the boxes at the left side or the link icon to go<br />
            directly to the url of the hex color.
          </HelpText>
          <HelpText $ls={-0.28}>
            Visit the <HelpLink>Color Chart</HelpLink> to see a list of color names.
          </HelpText>
        </HelpCard>
      </LowerRow>

      <Markup width="1920" height="1080" viewBox="0 0 1920 1080" fill="none" strokeWidth="8.700" strokeLinejoin="round" strokeLinecap="round">
        <path d="M498.300 703.500V769.500H998V743L997 709.500H498.300" stroke="#d1e428" />
        <path d="M928.500 280.500H990.500V705.500L972 704.500 945 703 930.500 703V281" stroke="#e65425" />
        <path d="M1000.500 279.500H1149.300V714.500H1005.600V290L1001 280L1003 308" stroke="#28e828" />
        <path d="M639.500 230.500V229.500L671 228.500 733 227.500 795 226.500H825.300V289.300H639.500L639 250 637.800 236V231" stroke="#e658dc" />
        <path d="M177.300 281V342L176 400V466L175 530V586L174.500 649.500H477.500V292.500H178" stroke="#001ce2" />
      </Markup>
    </Page>
  );
}
